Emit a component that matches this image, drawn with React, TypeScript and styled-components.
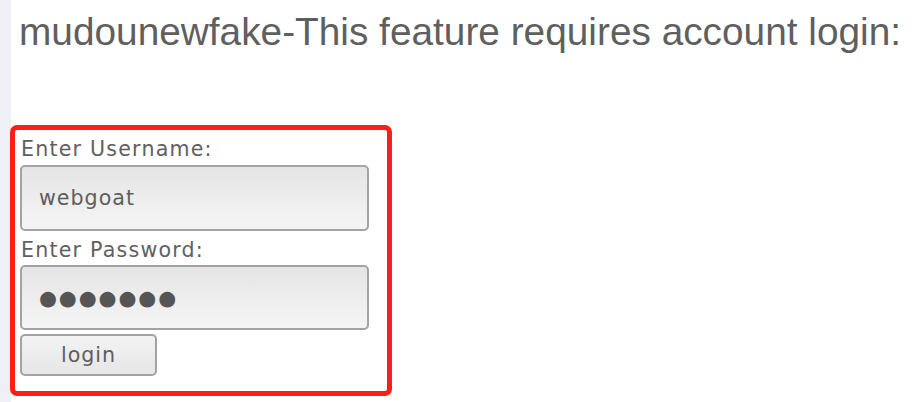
import React from "react";
import styled, { createGlobalStyle } from "styled-components";

const GlobalStyle = createGlobalStyle`
  html, body {
    margin: 0;
    padding: 0;
    background: #ffffff;
  }
  body {
    font-family: "DejaVu Sans", Verdana, sans-serif;
    color: #555555;
  }
`;

const Page = styled.div`
  display: flex;
  min-height: 402px;
`;

const SideStrip = styled.div`
  width: 11px;
  flex: none;
  background: #eff0f6;
`;

const Main = styled.main`
  flex: 1;
  margin-left: -1px;
  display: flex;
  flex-direction: column;
  align-items: flex-start;
`;

const Heading = styled.h1`
  margin: 9px 0 71px 9px;
  font-family: "Liberation Sans", Arial, sans-serif;
  font-weight: normal;
  font-size: 38.8px;
  line-height: 45px;
  color: #5f5f5f;
  white-space: nowrap;
`;

const LoginBox = styled.form`
  box-sizing: border-box;
  width: 382px;
  height: 271px;
  border: 5px solid #ff1d17;
  border-radius: 7px;
  padding: 0 0 0 5px;
  display: flex;
  flex-direction: column;
  align-items: flex-start;
`;

const Label = styled.label<{ $h: number }>`
  display: block;
  box-sizing: border-box;
  height: ${(p) => p.$h}px;
  padding: 7px 0 0 1px;
  font-size: 20.6px;
  line-height: 24px;
  letter-spacing: 1.2px;
  color: #606060;
`;

const Field = styled.input<{ $h: number; $dots?: boolean }>`
  box-sizing: border-box;
  width: 349px;
  height: ${(p) => p.$h}px;
  margin: 0;
  padding: 0 0 0 17px;
  border: 2px solid #a3a3a3;
  border-radius: 5px;
  background: linear-gradient(to bottom, #e5e5e5, #f5f5f5);
  font-family: "DejaVu Sans", Verdana, sans-serif;
  font-size: 20.6px;
  letter-spacing: ${(p) => (p.$dots ? "1.9px" : "1px")};
  color: ${(p) => (p.$dots ? "#555555" : "#5e5e5e")};
  outline: none;
`;

const LoginButton = styled.button`
  box-sizing: border-box;
  width: 137px;
  height: 42px;
  margin-top: 4px;
  padding: 0;
  border: 2px solid #a3a3a3;
  border-radius: 5px;
  background: linear-gradient(to bottom, #f3f3f3, #e6e6e6);
  font-family: "DejaVu Sans", Verdana, sans-serif;
  font-size: 20.6px;
  letter-spacing: 1px;
  color: #5e5e5e;
  cursor: pointer;
`;

export default function App() {
  return (
    <>
      <GlobalStyle />
      <Page>
        <SideStrip />
        <Main>
          <Heading>mudounewfake-This feature requires account login:</Heading>
          <LoginBox onSubmit={(e) => e.preventDefault()}>
            <Label $h={35} htmlFor="user">Enter Username:</Label>
            <Field id="user" $h={66} type="text" defaultValue="webgoat" readOnly />
            <Label $h={34} htmlFor="pass">Enter Password:</Label>
            <Field id="pass" $h={65} $dots type="text" defaultValue="●●●●●●●" readOnly />
            <LoginButton type="submit">login</LoginButton>
          </LoginBox>
        </Main>
      </Page>
    </>
  );
}
